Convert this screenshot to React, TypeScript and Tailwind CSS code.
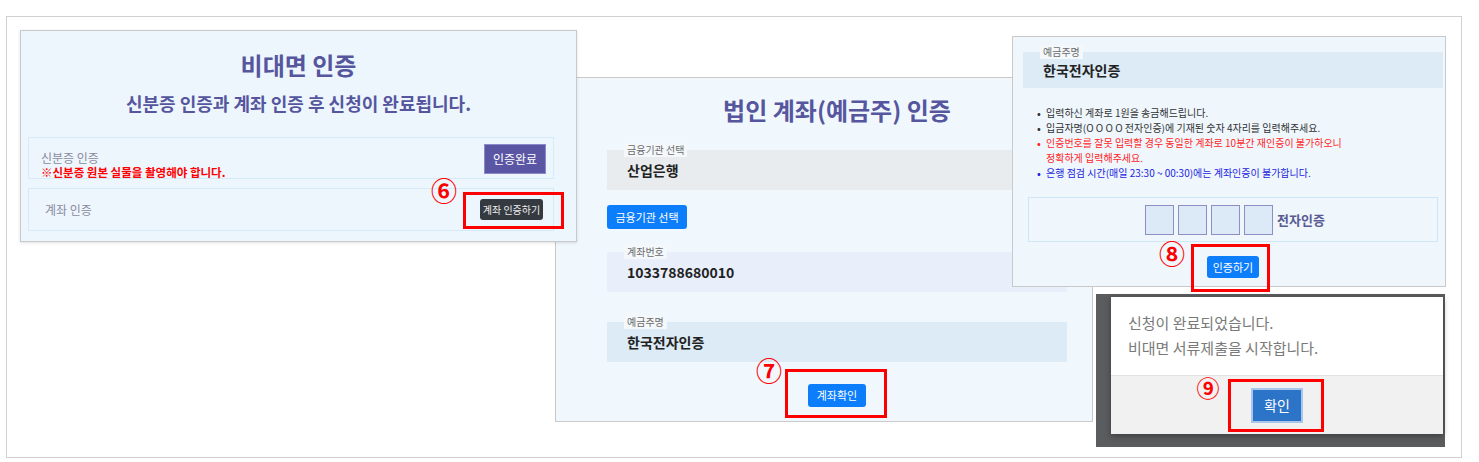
import React from "react";

const KR = "font-['Noto_Sans_CJK_KR','Noto_Sans',sans-serif]";

function FieldBox({
  label,
  value,
  bg,
  className = "",
}: {
  label: string;
  value: string;
  bg: string;
  className?: string;
}) {
  return (
    <div className={`relative flex items-center pl-[20px] ${bg} ${className}`}>
      <span className="absolute -top-[7px] left-[17px] bg-[#f4f8fb] px-[3px] text-[10px] leading-[14px] text-[#6b6b6b]">
        {label}
      </span>
      <span className="pt-[1px] text-[14px] font-bold text-[#222]">{value}</span>
    </div>
  );
}

function IdentityPanel() {
  return (
    <section className="absolute left-[13px] top-[13px] z-20 h-[212px] w-[557px] border border-[#c9c9c9] bg-[#eef6fd] shadow-[0_1px_3px_rgba(0,0,0,0.12)]">
      <h2 className="mt-[18px] text-center text-[24px] font-bold leading-[32px] text-[#55569e]">비대면 인증</h2>
      <p className="mt-[10px] text-center text-[18px] font-bold leading-[24px] text-[#55569e]">
        신분증 인증과 계좌 인증 후 신청이 완료됩니다.
      </p>
      <div className="ml-[7px] mt-[22px] flex w-[526px] flex-col gap-[9px]">
        <div className="flex h-[42px] items-start justify-between border border-[#d5ebfa] pl-[12px] pr-[7px]">
          <div className="mt-[12px] flex flex-col leading-[15px]">
            <span className="text-[12px] text-[#8a8b9e]">신분증 인증</span>
            <span className="text-[11.5px] font-bold text-[#ff0000]">※신분증 원본 실물을 촬영해야 합니다.</span>
          </div>
          <button className="mt-[6px] h-[30px] w-[62px] border border-[#8d89c9] bg-[#5b56a3] text-[12px] text-white">
            인증완료
          </button>
        </div>
        <div className="flex h-[43px] items-center justify-between border border-[#d5ebfa] pl-[16px] pr-[10px]">
          <span className="text-[12px] text-[#8a8b9e]">계좌 인증</span>
          <button className="h-[21px] w-[63px] rounded-[3px] bg-[#343a40] text-[10px] text-[#eeeeee]">
            계좌 인증하기
          </button>
        </div>
      </div>
    </section>
  );
}

function AccountPanel() {
  return (
    <section className="absolute left-[548px] top-[60px] z-10 h-[345px] w-[538px] border border-[#c9c9c9] bg-[#f0f7fd]">
      <div className="ml-[51px] flex w-[460px] flex-col">
        <h2 className="mt-[16px] text-center text-[24px] font-bold leading-[32px] text-[#55569e]">
          법인 계좌(예금주) 인증
        </h2>
        <FieldBox label="금융기관 선택" value="산업은행" bg="bg-[#e9ecef]" className="mt-[24px] h-[40px]" />
        <button className="mt-[15px] h-[24px] w-[80px] rounded-[3px] bg-[#0d7efb] text-[11px] text-white">
          금융기관 선택
        </button>
        <FieldBox label="계좌번호" value="1033788680010" bg="bg-[#e8effb]" className="mt-[23px] h-[40px]" />
        <FieldBox label="예금주명" value="한국전자인증" bg="bg-[#dcebf6]" className="mt-[30px] h-[40px]" />
        <button className="mx-auto mt-[22px] h-[23px] w-[58px] rounded-[3px] bg-[#0d7efb] text-[11px] text-white">
          계좌확인
        </button>
      </div>
    </section>
  );
}

const notes: { text: string; color: string; indent?: boolean }[] = [
  { text: "입력하신 계좌로 1원을 송금해드립니다.", color: "text-[#333333]" },
  { text: "입금자명(O O O O 전자인증)에 기재된 숫자 4자리를 입력해주세요.", color: "text-[#333333]" },
  { text: "인증번호를 잘못 입력할 경우 동일한 계좌로 10분간 재인증이 불가하오니", color: "text-[#ff1f1f]" },
  { text: "정확하게 입력해주세요.", color: "text-[#ff1f1f]", indent: true },
  { text: "은행 점검 시간(매일 23:30 ~ 00:30)에는 계좌인증이 불가합니다.", color: "text-[#2323dd]" },
];

function CodePanel() {
  return (
    <section className="absolute left-[1005px] top-[19px] z-20 h-[251px] w-[434px] border border-[#c9c9c9] bg-[#eff7fd]">
      <FieldBox label="예금주명" value="한국전자인증" bg="bg-[#dcebf6]" className="ml-[10px] mt-[15px] h-[36px] w-[420px]" />
      <ul className="ml-[24px] mt-[17px] flex flex-col text-[10px] leading-[15px]">
        {notes.map((n) => (
          <li key={n.text} className={`flex ${n.color}`}>
            <span className="w-[9px] font-bold">{n.indent ? "" : "•"}</span>
            <span>{n.text}</span>
          </li>
        ))}
      </ul>
      <div className="ml-[15px] mt-[17px] flex w-[410px] flex-col items-center">
        <div className="flex h-[45px] w-full items-center justify-center gap-[4px] border border-[#cfe6f7] pl-[4px]">
          {[0, 1, 2, 3].map((i) => (
            <div key={i} className="h-[30px] w-[29px] border border-[#8e8ec4] bg-[#dce9f6]" />
          ))}
          <span className="text-[13px] font-bold text-[#5a5b93]">전자인증</span>
        </div>
        <button className="mt-[14px] h-[22px] w-[52px] rounded-[3px] bg-[#0d7efb] text-[11px] text-white">
          인증하기
        </button>
      </div>
    </section>
  );
}

function DonePanel() {
  return (
    <section className="absolute left-[1089px] top-[277px] z-20 h-[153px] w-[349px] bg-[#5a5c5e] pl-[15px] pt-[3px]">
      <div className="flex h-[137px] w-[332px] flex-col bg-white shadow-[0_2px_6px_rgba(0,0,0,0.35)]">
        <div className="h-[78px] pl-[17px] pt-[13px] text-[15px] leading-[25px] text-[#7a7a7a]">
          <p>신청이 완료되었습니다.</p>
          <p>비대면 서류제출을 시작합니다.</p>
        </div>
        <div className="flex flex-1 items-start justify-center border-t border-[#e2e2e2] bg-[#f1f1f1] pt-[12px]">
          <button className="h-[35px] w-[52px] border-2 border-[#a8c6ec] bg-[#2c74c8] text-[14px] text-white">
            확인
          </button>
        </div>
      </div>
    </section>
  );
}

function Mark({ n, left, top, size = 24 }: { n: string; left: string; top: string; size?: number }) {
  return (
    <span
      className={`absolute z-30 flex h-[24px] w-[24px] items-center justify-center font-bold leading-none text-[#ff0000] ${left} ${top} ${
        size === 24 ? "text-[26px]" : "text-[23px]"
      }`}
    >
      {n}
    </span>
  );
}

export default function App() {
  return (
    <div className={`h-[462px] w-[1479px] bg-white pl-[6px] pt-[16px] ${KR}`}>
      <div className="relative h-[442px] w-[1456px] border border-[#d0d0d0] bg-white">
        <IdentityPanel />
        <AccountPanel />
        <CodePanel />
        <DonePanel />

        <div className="absolute left-[456px] top-[175px] z-30 h-[37px] w-[101px] border-[3px] border-[#ff0000]" />
        <div className="absolute left-[778px] top-[352px] z-30 h-[49px] w-[102px] border-[3px] border-[#ff0000]" />
        <div className="absolute left-[1184px] top-[227px] z-30 h-[48px] w-[79px] border-[3px] border-[#ff0000]" />
        <div className="absolute left-[1221px] top-[362px] z-30 h-[53px] w-[96px] border-[3px] border-[#ff0000]" />

        <Mark n="⑥" left="left-[425px]" top="top-[161px]" />
        <Mark n="⑦" left="left-[750px]" top="top-[341px]" />
        <Mark n="⑧" left="left-[1153px]" top="top-[224px]" />
        <Mark n="⑨" left="left-[1189px]" top="top-[358px]" size={21} />
      </div>
    </div>
  );
}
